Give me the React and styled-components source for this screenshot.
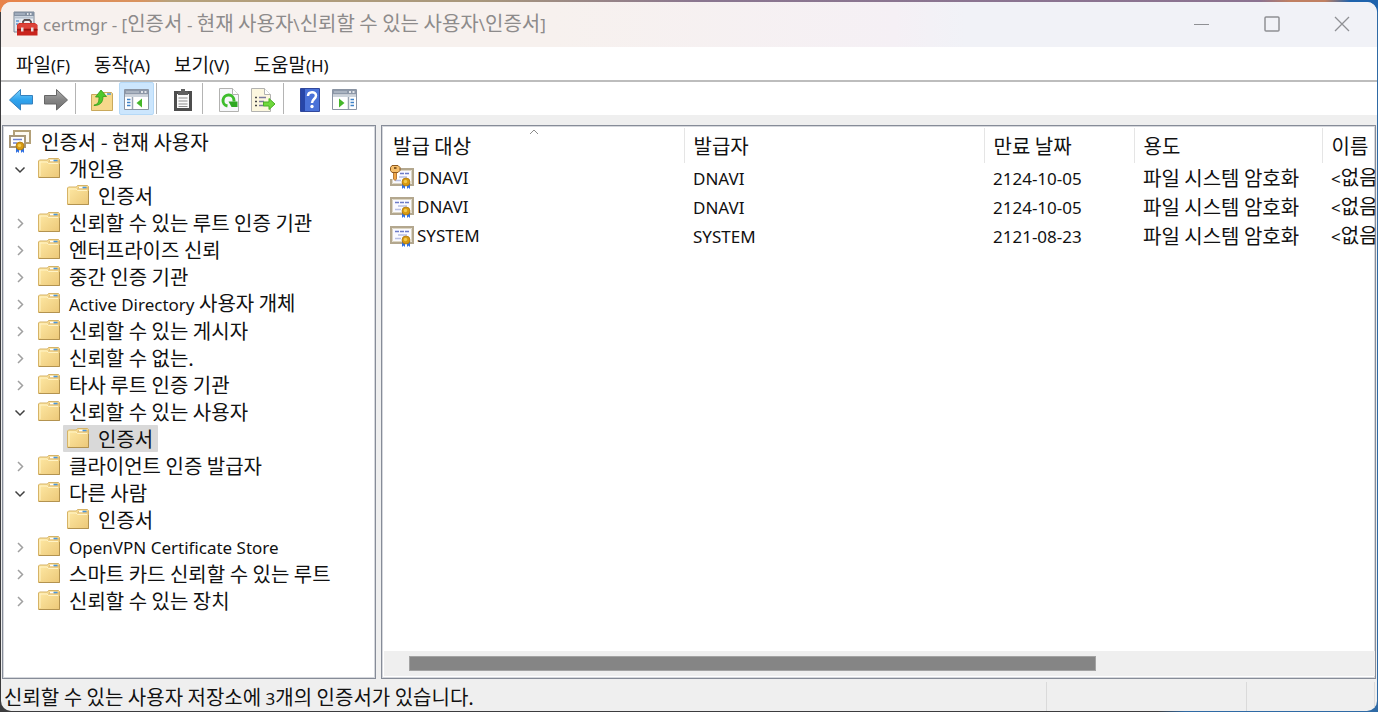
import React, { useState } from "react";
import styled, { createGlobalStyle } from "styled-components";

const GlobalStyle = createGlobalStyle`
  * {
    box-sizing: border-box;
  }
  body {
    margin: 0;
    color: #111;
    font-family: "Noto Sans CJK KR", "Noto Sans", sans-serif;
    font-size: 20px;
    line-height: 26px;
  }
  button {
    margin: 0;
    padding: 0;
    border: 0;
    background: none;
    color: inherit;
    font: inherit;
    text-align: left;
    white-space: nowrap;
  }
  svg {
    display: block;
    flex: none;
  }
`;

const Desktop = styled.div`
  height: 100vh;
  padding: 2px 1px 1px;
  background:
    linear-gradient(90deg, #e8834a 0, #d9935f 140px, #b7a27c 170px, #a8977c 480px, #8a7690 700px, #8c7391 1260px, #c08062 1290px, #c08062 1325px, #1f63ad 1350px) top / 100% 12px no-repeat,
    linear-gradient(90deg, #3c3c3e 0, #3c3c3e 84%, #2f6aa5 86%);
`;

const Frame = styled.div`
  display: flex;
  flex-direction: column;
  height: 100%;
  overflow: hidden;
  border-radius: 10px;
  background: #efefef;
`;

const Latin = styled.span`
  font-family: "Noto Sans", "Open Sans", sans-serif;
  font-size: 17px;
`;

const TitleBar = styled.header`
  display: flex;
  align-items: center;
  flex: none;
  height: 45px;
  padding: 0 0 2px 12px;
  background: linear-gradient(90deg, #f7f1ee 0, #f7f1ee 40%, #f5f0f5 65%, #f1f2f7 70%);
  color: #8d8b8b;
  h1 {
    flex: 1;
    margin: 0;
    padding-left: 5px;
    font-size: 20px;
    font-weight: 400;
    white-space: nowrap;
  }
`;

const Caption = styled.button`
  display: flex;
  align-items: center;
  justify-content: center;
  width: 70px;
  height: 43px;
  color: #8f9094;
  &:hover {
    background: #e4e5ea;
  }
`;

const MenuBar = styled.nav`
  display: flex;
  flex: none;
  gap: 24px;
  height: 35px;
  padding: 4px 15px;
  border-bottom: 2px solid #bdbdbd;
  background: #fff;
  font-size: 19px;
`;

const ToolBar = styled.div`
  display: flex;
  flex: none;
  align-items: center;
  height: 33px;
  padding-left: 2px;
  background: #fff;
`;

const Tool = styled.button`
  display: flex;
  align-items: center;
  justify-content: center;
  width: 35px;
  height: 33px;
  padding-top: 2px;
  border: 1px solid ${(p) => (p.$on ? "#b5d9f7" : "transparent")};
  background: ${(p) => (p.$on ? "#cce6fd" : "none")};
  border-radius: 2px;
`;

const Divider = styled.span`
  width: 1px;
  height: 31px;
  margin: 0 8px 0 2px;
  background: #b4b4b4;
`;

const Body = styled.main`
  display: flex;
  flex: 1;
  gap: 5px;
  min-height: 0;
  padding: 10px 1px 0;
`;

const Pane = styled.section`
  display: flex;
  flex-direction: column;
  min-width: 0;
  border: 1px solid #868c98;
  box-shadow: inset 0 0 0 1px #d5d7dc;
  background: #fff;
`;

const TreePane = styled(Pane)`
  flex: 0 0 374px;
`;

const ListPane = styled(Pane)`
  flex: 1;
  padding: 2px 0 2px 2px;
`;

const Tree = styled.ul`
  margin: 0;
  padding: 2px 0 0;
  list-style: none;
`;

const TreeRow = styled.li`
  display: flex;
  align-items: center;
  height: 27px;
  padding-left: ${(p) => [1, 6, 60][p.$level]}px;
`;

const Twisty = styled.button`
  display: flex;
  align-items: center;
  justify-content: center;
  width: 22px;
  height: 27px;
  margin-right: 3px;
`;

const Node = styled.button`
  display: flex;
  align-items: center;
  gap: 9px;
  height: 27px;
  padding: 0 5px 0 4px;
  border-radius: 1px;
  background: ${(p) => (p.$selected ? "#d9d9d9" : "none")};
  svg {
    margin-bottom: 2px;
  }
`;

const Scroller = styled.div`
  flex: 1;
  overflow: hidden;
`;

const Table = styled.table`
  width: 1140px;
  table-layout: fixed;
  border-collapse: collapse;
  th,
  td {
    padding: 0 0 0 9px;
    font-weight: 400;
    text-align: left;
    white-space: nowrap;
  }
  th {
    height: 35px;
    padding-top: 1px;
    border-right: 1px solid #e5e5e5;
  }
  td {
    height: 29px;
  }
  td:first-child {
    padding-left: 6px;
  }
`;

const HeadButton = styled.button`
  position: relative;
  display: block;
  width: 100%;
  svg {
    position: absolute;
    top: -4px;
    left: 50%;
    margin-left: -9px;
  }
`;

const NameCell = styled.div`
  display: flex;
  align-items: center;
  gap: 3px;
`;

const ScrollTrack = styled.div`
  flex: none;
  height: 25px;
  padding: 5px 25px;
  background: #efefef;
`;

const ScrollThumb = styled.div`
  width: 73%;
  height: 15px;
  border: 1px solid #a3a3a3;
  background: #858585;
`;

const StatusBar = styled.footer`
  display: flex;
  flex: none;
  height: 32px;
  padding: 3px 2px 0 3px;
  white-space: nowrap;
`;

const StatusCell = styled.div`
  flex: ${(p) => (p.$width ? `0 0 ${p.$width}px` : 1)};
  padding-top: 2px;
  border-right: 1px solid #dadada;
`;

const FolderIcon = () => (
  <svg width="22" height="22" viewBox="0 0 22 22">
    <defs>
      <linearGradient id="folder" x1="0" y1="0" x2="1" y2="1">
        <stop offset="0" stopColor="#ffeaa6" />
        <stop offset="1" stopColor="#ecc878" />
      </linearGradient>
    </defs>
    <path d="M.5 20.500V4l1-1h8l1-1.500h10l1 1v18z" fill="url(#folder)" stroke="#d6b366" />
    <path d="M10 5.500l1-2.500h10v2.500z" fill="#e3c27c" />
    <path d="M12 3.500h4" stroke="#fff" strokeWidth="1.500" />
    <path d="M15.500 3.500h4" stroke="#4a97dc" strokeWidth="1.500" />
    <path d="M2 19V5h7l1.500 1.500H20" fill="none" stroke="#fff3c6" />
    <path d="M1 20.500h20.500V7" fill="none" stroke="#b39350" />
  </svg>
);

const Ribbon = ({ x, y }) => (
  <g transform={`translate(${x} ${y})`}>
    <path d="M1 5h3v6L2.500 9.500 1 11zM6 5h3v6L7.500 9.500 6 11z" fill="#2f6fe0" />
    <circle cx="5" cy="4" r="4" fill="#d79a12" stroke="#a87208" strokeWidth=".7" />
    <circle cx="4.500" cy="3.500" r="1.700" fill="#f3cb4d" />
  </g>
);

const CertIcon = ({ withKey }) => (
  <svg width="24" height="25" viewBox="0 0 24 25">
    <path d="M1 4h22v16H1z" fill="#fff" stroke="#b3a78e" strokeWidth="2" />
    <path d="M2.500 5.500h19v13h-19z" fill="#fafaff" stroke="#ddd6c4" />
    <path d="M5 8.500h14" stroke="#6d7cc8" strokeWidth="1.500" strokeDasharray="4 1" />
    <path d="M8 12h9M5 15.500h6" stroke="#b7bfe4" strokeWidth="1.500" />
    <Ribbon x={11} y={13} />
    {withKey && (
      <g>
        <path d="M0 0h9v14H0z" fill="#fff" />
        <path d="M3.500 7h3v7L5 15.500 3.500 14z" fill="#f0a648" stroke="#a8641c" strokeWidth=".8" />
        <path d="M2 .5h6l2 2v3l-2 2H2l-1.500-2v-3z" fill="#f6bf6c" stroke="#8e5a20" />
        <path d="M4 3h2.500" stroke="#5f3a10" strokeWidth="1.500" />
      </g>
    )}
  </svg>
);

const StoreIcon = () => (
  <svg width="24" height="24" viewBox="0 0 24 24">
    <path d="M6 2h16v12H6z" fill="#fdfaf2" stroke="#b3a078" strokeWidth="2" />
    <path d="M2 7h15v11H2z" fill="#fff" stroke="#a9987a" strokeWidth="2" />
    <path d="M5 10.500h9M5 14h4" stroke="#6f82d0" strokeWidth="1.500" />
    <Ribbon x={7} y={13} />
  </svg>
);

const Chevron = ({ open }) => (
  <svg width="12" height="12" viewBox="0 0 12 12" fill="none" strokeWidth="1.500">
    {open ? (
      <path d="M1.500 4.500L6 9l4.500-4.500" stroke="#404040" />
    ) : (
      <path d="M4 2l4.500 4.500L4 11" stroke="#a0a0a0" />
    )}
  </svg>
);

const AppIcon = () => (
  <svg width="25" height="25" viewBox="0 0 25 25">
    <path d="M1 1h20v20H1z" fill="#dfe6ee" stroke="#7d8997" />
    <path d="M1 1h20v4H1z" fill="#8592a3" />
    <path d="M2 3h10" stroke="#b9c4d2" />
    <path d="M14 3h1.500M17 3h1.500" stroke="#fff" strokeWidth="1.500" />
    <path d="M2 6.500h18" stroke="#b9c3cf" strokeWidth="2" />
    <path d="M3 10h3M3 13h2" stroke="#5d96d4" strokeWidth="1.500" />
    <path d="M8 8h12v6H8z" fill="#eef1f4" />
    <path d="M10 13v-2.500L11.500 9h5l1.500 1.500V13" fill="none" stroke="#5c5050" strokeWidth="1.800" />
    <path d="M4 14l2-2h16l2.500 2v10.500H4z" fill="#c9241d" />
    <path d="M4.500 14l2-1.500h15L24 14v3.500H4.500z" fill="#dc4339" />
    <path d="M4 18h20.500v1.500H4z" fill="#9c1712" />
    <path d="M8 16.500h2.500v4H8zM18 16.500h2.500v4H18z" fill="#e8dede" />
  </svg>
);

const ArrowIcon = ({ forward }) => (
  <svg width="24" height="22" viewBox="0 0 24 22">
    <defs>
      <linearGradient id={forward ? "fwd" : "back"} x1="0" y1="0" x2="0" y2="1">
        <stop offset="0" stopColor={forward ? "#b0b0b0" : "#7fd2fb"} />
        <stop offset=".5" stopColor={forward ? "#858585" : "#2fa4ee"} />
        <stop offset="1" stopColor={forward ? "#707070" : "#2b8fdc"} />
      </linearGradient>
    </defs>
    <path
      d="M.5 11L11.500.500V6.500H23.500v8.500H11.500v6z"
      transform={forward ? "matrix(-1 0 0 1 24 0)" : undefined}
      fill={`url(#${forward ? "fwd" : "back"})`}
      stroke={forward ? "#666" : "#3580bd"}
      strokeLinejoin="round"
    />
  </svg>
);

const UpIcon = () => (
  <svg width="22" height="24" viewBox="0 0 22 24">
    <path d="M.5 22.500V6.500h9.500l1.500-2h9l1 1v17z" fill="#f6d88b" stroke="#c9a95c" />
    <path d="M14 6h3" stroke="#fff" strokeWidth="1.500" />
    <path d="M16 6h4" stroke="#4a97dc" strokeWidth="1.500" />
    <path d="M3 17c4-.5 5-3 5-8H4.500L10 2l5.500 6.500H12c0 6-3 9-9 9z" fill="#4ec92b" stroke="#319b18" strokeLinejoin="round" strokeWidth=".8" />
  </svg>
);

const ConsoleIcon = ({ flip }) => (
  <svg width="25" height="21" viewBox="0 0 25 21">
    <path d="M.5.500h24v20H.500z" fill="#fff" stroke="#8a94a3" />
    <path d="M1 1h23v4.500H1z" fill="#8d98a8" />
    <path d="M2 3h13" stroke="#c8d0da" />
    <path d="M17 3h2M20.500 3h2" stroke="#fff" strokeWidth="1.500" />
    <path d="M1 7h23" stroke="#ccd3db" strokeWidth="2" />
    <g transform={flip ? "matrix(-1 0 0 1 25 0)" : undefined}>
      <path d="M8.500 8v12" stroke="#9aa4b2" strokeWidth="1.500" />
      <path d="M3 10.500h3.500M3 13.500h3.500M3 16.500h3.500" stroke="#3f82c8" strokeWidth="1.500" />
      <path d="M18 9.500v9L12.500 14z" fill="#45b72a" />
    </g>
  </svg>
);

const ClipboardIcon = () => (
  <svg width="20" height="24" viewBox="0 0 20 24">
    <path d="M2.500 4.500h15v17h-15z" fill="#fafafa" stroke="#4d4d4d" strokeWidth="3" />
    <path d="M5 7V3.500h3V1h4v2.500h3V7z" fill="#5f5f5f" />
    <path d="M5.500 10h9M5.500 13h9M5.500 16h9M5.500 18.500h9" stroke="#8d8d8d" />
  </svg>
);

const Sheet = ({ tint }) => (
  <g>
    <path d="M.5.500h13l6 6v17H.500z" fill={tint} stroke="#b2b2b0" />
    <path d="M13.500.500v6h6" fill="#fff" stroke="#b2b2b0" />
  </g>
);

const RefreshIcon = () => (
  <svg width="20" height="24" viewBox="0 0 20 24">
    <Sheet tint="#f7f8fa" />
    <path d="M8.500 18A5.500 5.500 0 1 1 15 12.500v1" fill="none" stroke="#3dbd2c" strokeWidth="3" />
    <path d="M9.500 13.500h9V19h-6z" fill="#2fa822" />
  </svg>
);

const ExportIcon = () => (
  <svg width="25" height="24" viewBox="0 0 25 24">
    <Sheet tint="#fcf7df" />
    <path d="M4 9.500h2M4 13.500h2M4 17.500h2" stroke="#444" strokeWidth="1.500" />
    <path d="M8 9.500h7M8 13.500h5M8 17.500h5" stroke="#7c7a9e" strokeWidth="1.500" />
    <path d="M12.500 14H18v-3.500l6 5.500-6 5.500V18h-5.500z" fill="#6fd83c" stroke="#49ae27" strokeLinejoin="round" />
  </svg>
);

const HelpIcon = () => (
  <svg width="20" height="24" viewBox="0 0 20 24">
    <path d="M.5.500h19v23H.500z" fill="#4a72d8" stroke="#31489c" />
    <path d="M1 1h4v22H1z" fill="#2746a8" />
    <path d="M8 8c0-5 8-5 8-.500 0 3.500-4 3.500-4 7.500" fill="none" stroke="#fff" strokeWidth="2.500" />
    <circle cx="12" cy="18.500" r="1.700" fill="#fff" />
  </svg>
);

const nodes = [
  { level: 1, name: "개인용", open: true },
  { level: 2, name: "인증서" },
  { level: 1, name: "신뢰할 수 있는 루트 인증 기관" },
  { level: 1, name: "엔터프라이즈 신뢰" },
  { level: 1, name: "중간 인증 기관" },
  { level: 1, latin: "Active Directory", name: " 사용자 개체" },
  { level: 1, name: "신뢰할 수 있는 게시자" },
  { level: 1, name: "신뢰할 수 없는." },
  { level: 1, name: "타사 루트 인증 기관" },
  { level: 1, name: "신뢰할 수 있는 사용자", open: true },
  { level: 2, name: "인증서" },
  { level: 1, name: "클라이언트 인증 발급자" },
  { level: 1, name: "다른 사람", open: true },
  { level: 2, name: "인증서" },
  { level: 1, latin: "OpenVPN Certificate Store" },
  { level: 1, name: "스마트 카드 신뢰할 수 있는 루트" },
  { level: 1, name: "신뢰할 수 있는 장치" },
];

const certs = [
  { name: "DNAVI", expires: "2124-10-05", withKey: true },
  { name: "DNAVI", expires: "2124-10-05" },
  { name: "SYSTEM", expires: "2121-08-23" },
];

const menus = [
  ["파일", "(F)"],
  ["동작", "(A)"],
  ["보기", "(V)"],
  ["도움말", "(H)"],
];

export default function App() {
  const [selected, setSelected] = useState(10);

  return (
    <Desktop>
      <GlobalStyle />
      <Frame>
        <TitleBar>
          <AppIcon />
          <h1>
            <Latin>certmgr - [</Latin>인증서 <Latin>-</Latin> 현재 사용자<Latin>\</Latin>신뢰할 수 있는 사용자<Latin>\</Latin>인증서<Latin>]</Latin>
          </h1>
          <Caption aria-label="최소화">
            <svg width="16" height="16" stroke="currentColor"><path d="M0 8.500h15" /></svg>
          </Caption>
          <Caption aria-label="최대화">
            <svg width="16" height="16" stroke="currentColor" fill="none"><rect x="1" y="1" width="14" height="14" rx="1" strokeWidth="1.500" /></svg>
          </Caption>
          <Caption aria-label="닫기">
            <svg width="16" height="16" stroke="currentColor" strokeWidth="1.300"><path d="M1 1l14 14M15 1L1 15" /></svg>
          </Caption>
        </TitleBar>
        <MenuBar>
          {menus.map(([name, hotkey]) => (
            <button key={name}>{name}<Latin>{hotkey}</Latin></button>
          ))}
        </MenuBar>
        <ToolBar>
          <Tool aria-label="뒤로"><ArrowIcon /></Tool>
          <Tool aria-label="앞으로"><ArrowIcon forward /></Tool>
          <Divider />
          <Tool aria-label="한 수준 위로"><UpIcon /></Tool>
          <Tool aria-label="콘솔 트리" aria-pressed="true" $on><ConsoleIcon /></Tool>
          <Divider />
          <Tool aria-label="복사"><ClipboardIcon /></Tool>
          <Divider />
          <Tool aria-label="새로 고침"><RefreshIcon /></Tool>
          <Tool aria-label="목록 내보내기"><ExportIcon /></Tool>
          <Divider />
          <Tool aria-label="도움말"><HelpIcon /></Tool>
          <Tool aria-label="작업 창"><ConsoleIcon flip /></Tool>
        </ToolBar>
        <Body>
          <TreePane>
            <Tree>
              <TreeRow $level={0}>
                <Node><StoreIcon />인증서 - 현재 사용자</Node>
              </TreeRow>
              {nodes.map((node, i) => (
                <TreeRow key={i} $level={node.level}>
                  {node.level === 1 && (
                    <Twisty aria-label={node.open ? "축소" : "확장"}><Chevron open={node.open} /></Twisty>
                  )}
                  <Node $selected={i === selected} onClick={() => setSelected(i)}>
                    <FolderIcon />
                    <span>{node.latin && <Latin>{node.latin}</Latin>}{node.name}</span>
                  </Node>
                </TreeRow>
              ))}
            </Tree>
          </TreePane>
          <ListPane>
            <Scroller>
              <Table>
                <colgroup>
                  <col width="300" />
                  <col width="300" />
                  <col width="150" />
                  <col width="188" />
                  <col />
                </colgroup>
                <thead>
                  <tr>
                    <th>
                      <HeadButton>
                        발급 대상
                        <svg width="10" height="6" fill="none" stroke="#8c8c8c"><path d="M1 5l4-4 4 4" /></svg>
                      </HeadButton>
                    </th>
                    <th><HeadButton>발급자</HeadButton></th>
                    <th><HeadButton>만료 날짜</HeadButton></th>
                    <th><HeadButton>용도</HeadButton></th>
                    <th><HeadButton>이름</HeadButton></th>
                  </tr>
                </thead>
                <tbody>
                  {certs.map((cert, i) => (
                    <tr key={i}>
                      <td>
                        <NameCell><CertIcon withKey={cert.withKey} /><Latin>{cert.name}</Latin></NameCell>
                      </td>
                      <td><Latin>{cert.name}</Latin></td>
                      <td><Latin>{cert.expires}</Latin></td>
                      <td>파일 시스템 암호화</td>
                      <td><Latin>&lt;</Latin>없음<Latin>&gt;</Latin></td>
                    </tr>
                  ))}
                </tbody>
              </Table>
            </Scroller>
            <ScrollTrack><ScrollThumb /></ScrollTrack>
          </ListPane>
        </Body>
        <StatusBar>
          <StatusCell>신뢰할 수 있는 사용자 저장소에 <Latin>3</Latin>개의 인증서가 있습니다.</StatusCell>
          <StatusCell $width={200} />
          <StatusCell $width={128} />
        </StatusBar>
      </Frame>
    </Desktop>
  );
}
